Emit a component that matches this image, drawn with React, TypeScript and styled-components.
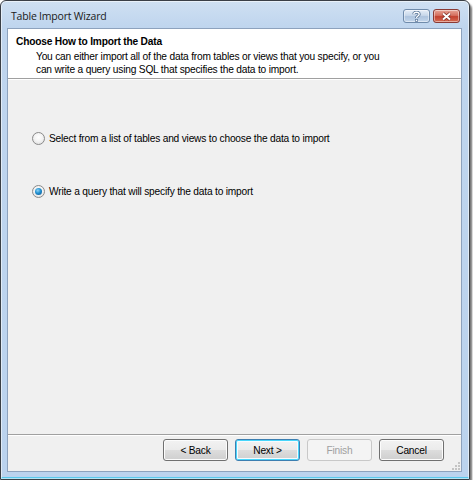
import React from "react";
import styled, { createGlobalStyle } from "styled-components";

const Global = createGlobalStyle`
  html, body { margin: 0; padding: 0; background: #ffffff; }
  body {
    font-family: "Liberation Sans", Arial, sans-serif;
    font-size: 10.2px;
    letter-spacing: -0.2px;
    color: #000;
  }
`;

const Shadow = styled.div`
  width: 470px;
  height: 480px;
  box-shadow: 2px 3px 2px rgba(0, 0, 0, 0.55);
  border-radius: 6px 6px 0 0;
`;

const Frame = styled.div`
  box-sizing: border-box;
  width: 100%;
  height: 100%;
  border: 1px solid #3a3f46;
  border-radius: 6px 6px 0 0;
  background: linear-gradient(180deg, #cfe0f2 0px, #bfd5ee 26px, #bbd3ee 100%);
  box-shadow: inset 0 0 0 1px rgba(255, 255, 255, 0.55), inset 0 -2px 0 #59c8ec;
  display: flex;
  flex-direction: column;
  padding: 0 7px 7px 6px;
`;

const TitleBar = styled.div`
  height: 27px;
  display: flex;
  align-items: flex-start;
  justify-content: space-between;
`;

const Title = styled.div`
  font-family: "Open Sans", "Noto Sans", sans-serif;
  font-size: 10.5px;
  letter-spacing: -0.2px;
  color: #1a1a1a;
  padding: 8px 0 0 4px;
`;

const Caption = styled.div`
  display: flex;
  gap: 3px;
  padding-top: 8px;
  margin-right: 2px;
`;

const CapButton = styled.div<{ $close?: boolean }>`
  box-sizing: border-box;
  width: 27px;
  height: 14px;
  border: 1px solid ${(p) => (p.$close ? "#8a3a34" : "#6f8bab")};
  border-radius: 3px;
  background: ${(p) =>
    p.$close
      ? "linear-gradient(180deg, #e7a597 0%, #d5705f 45%, #c2412f 55%, #d66b52 100%)"
      : "linear-gradient(180deg, #e6eef8 0%, #c8d8ea 45%, #aec4de 55%, #c3d6ec 100%)"};
  box-shadow: inset 0 0 0 1px rgba(255, 255, 255, 0.45);
  display: flex;
  align-items: center;
  justify-content: center;
`;

const Client = styled.div`
  flex: 1;
  display: flex;
  flex-direction: column;
  border: 1px solid #8da2bd;
  background: #f0f0f0;
`;

const Header = styled.div`
  background: #ffffff;
  height: 50px;
  box-sizing: border-box;
  padding: 6px 0 0 8px;
  border-bottom: 1px solid #a0a0a0;
  box-shadow: 0 1px 0 #ffffff;
`;

const HeaderTitle = styled.div`
  font-weight: bold;
  line-height: 13px;
  margin-bottom: 2px;
`;

const HeaderText = styled.div`
  padding-left: 20px;
  line-height: 13px;
`;

const Body = styled.div`
  flex: 1;
  display: flex;
  flex-direction: column;
  padding: 53px 0 0 24px;
  gap: 40px;
`;

const Option = styled.label`
  display: flex;
  align-items: center;
  gap: 4px;
  height: 13px;
`;

const Radio = styled.span<{ $checked?: boolean }>`
  box-sizing: border-box;
  width: 13px;
  height: 13px;
  border-radius: 50%;
  border: 1px solid #8a8a8a;
  background: radial-gradient(circle at 50% 40%, #ffffff 0%, #f4f4f4 45%, #d8d8d8 100%);
  display: flex;
  align-items: center;
  justify-content: center;
  &::after {
    content: "";
    display: ${(p) => (p.$checked ? "block" : "none")};
    width: 7px;
    height: 7px;
    border-radius: 50%;
    background: radial-gradient(circle at 40% 35%, #8fd3f5 0%, #1f8fd0 45%, #0f4f86 100%);
  }
`;

const Footer = styled.div`
  height: 37px;
  box-sizing: border-box;
  border-top: 1px solid #a0a0a0;
  box-shadow: inset 0 1px 0 #ffffff;
  display: flex;
  justify-content: flex-end;
  align-items: flex-start;
  gap: 7px;
  padding: 4px 17px 0 0;
  position: relative;
`;

const Button = styled.button<{ $default?: boolean }>`
  box-sizing: border-box;
  width: 65px;
  height: 22px;
  font-family: "Liberation Sans", Arial, sans-serif;
  font-size: 10.2px;
  letter-spacing: -0.2px;
  color: ${(p) => (p.disabled ? "#a0a0a0" : "#000")};
  border-radius: 3px;
  border: 1px solid ${(p) => (p.disabled ? "#c8c8c8" : p.$default ? "#3c7fb1" : "#707070")};
  background: ${(p) =>
    p.disabled
      ? "#f4f4f4"
      : "linear-gradient(180deg, #f2f2f2 0%, #ebebeb 49%, #dddddd 50%, #cfcfcf 100%)"};
  box-shadow: ${(p) =>
    p.disabled
      ? "none"
      : p.$default
      ? "inset 0 0 0 1px #48d6fb, inset 0 0 0 2px #f6fbfe"
      : "inset 0 0 0 1px #fcfcfc"};
  padding: 0;
`;

const Grip = styled.svg`
  position: absolute;
  right: 1px;
  bottom: 1px;
`;

export default function App() {
  return (
    <>
      <Global />
      <Shadow>
        <Frame>
          <TitleBar>
            <Title>Table Import Wizard</Title>
            <Caption>
              <CapButton>
                <svg width="9" height="11" viewBox="0 0 9 11">
                  <path
                    d="M1.8 3.2 C1.8 0.6 7.2 0.6 7.2 3.2 C7.2 5 4.5 5 4.5 7"
                    fill="none"
                    stroke="#5a7698"
                    strokeWidth="3"
                  />
                  <path
                    d="M1.8 3.2 C1.8 0.6 7.2 0.6 7.2 3.2 C7.2 5 4.5 5 4.5 7"
                    fill="none"
                    stroke="#ffffff"
                    strokeWidth="1.3"
                  />
                  <rect x="3.1" y="8" width="2.8" height="2.8" fill="#5a7698" />
                  <rect x="3.8" y="8.7" width="1.4" height="1.4" fill="#ffffff" />
                </svg>
              </CapButton>
              <CapButton $close>
                <svg width="11" height="9" viewBox="0 0 11 9">
                  <path d="M2 1.5 L9 7.5 M9 1.5 L2 7.5" stroke="#7a2a22" strokeWidth="3.4" />
                  <path d="M2 1.5 L9 7.5 M9 1.5 L2 7.5" stroke="#ffffff" strokeWidth="2" />
                </svg>
              </CapButton>
            </Caption>
          </TitleBar>
          <Client>
            <Header>
              <HeaderTitle>Choose How to Import the Data</HeaderTitle>
              <HeaderText>
                You can either import all of the data from tables or views that you specify, or you
                <br />
                can write a query using SQL that specifies the data to import.
              </HeaderText>
            </Header>
            <Body>
              <Option>
                <Radio />
                Select from a list of tables and views to choose the data to import
              </Option>
              <Option>
                <Radio $checked />
                Write a query that will specify the data to import
              </Option>
            </Body>
            <Footer>
              <Button>&lt; Back</Button>
              <Button $default>Next &gt;</Button>
              <Button disabled>Finish</Button>
              <Button>Cancel</Button>
              <Grip width="8" height="8" viewBox="0 0 8 8">
                <rect x="6" y="0" width="2" height="2" fill="#c4c4c4" />
                <rect x="3" y="3" width="2" height="2" fill="#c4c4c4" />
                <rect x="6" y="3" width="2" height="2" fill="#c4c4c4" />
                <rect x="0" y="6" width="2" height="2" fill="#c4c4c4" />
                <rect x="3" y="6" width="2" height="2" fill="#c4c4c4" />
                <rect x="6" y="6" width="2" height="2" fill="#c4c4c4" />
              </Grip>
            </Footer>
          </Client>
        </Frame>
      </Shadow>
    </>
  );
}
